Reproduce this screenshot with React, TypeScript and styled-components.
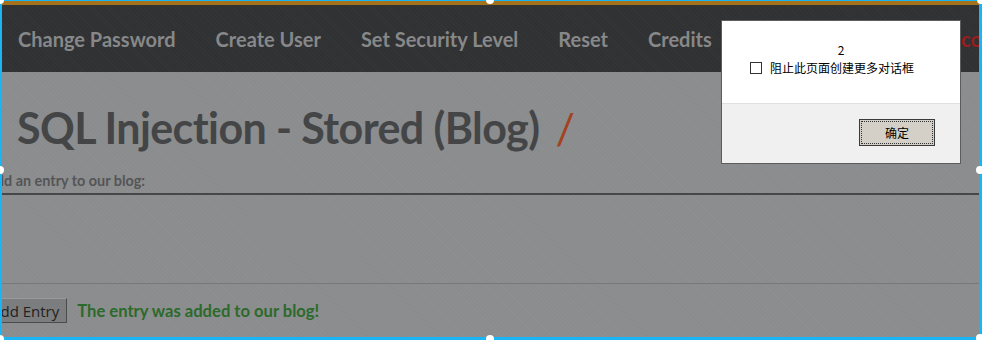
import React from "react";
import styled, { createGlobalStyle } from "styled-components";

const Global = createGlobalStyle`
  html, body { margin: 0; padding: 0; background: #8b8c8d; overflow: hidden; }
  * { box-sizing: border-box; }
`;

const Page = styled.div`
  position: relative;
  width: 982px;
  height: 340px;
  overflow: hidden;
  background-color: #8b8c8d;
  background-image: repeating-linear-gradient(45deg, rgba(255,255,255,0.025) 0 1px, transparent 1px 3px);
  font-family: Lato, "Liberation Sans", sans-serif;
  display: flex;
  flex-direction: column;
`;

const TopStripe = styled.div`
  height: 5px;
  background: #a4721c;
  border-top: 1px solid #19b5f5;
`;

const NavBar = styled.nav`
  height: 67px;
  background-color: #303133;
  background-image: repeating-linear-gradient(45deg, rgba(255,255,255,0.02) 0 1px, transparent 1px 3px);
  display: flex;
  align-items: center;
  padding-left: 18px;
  gap: 40px;
  white-space: nowrap;
`;

const NavItem = styled.span`
  font-family: Lato, "Liberation Sans", sans-serif;
  font-weight: 700;
  font-size: 20px;
  color: #878889;
`;

const Welcome = styled.span`
  margin-left: -8px;
  font-family: Lato, "Liberation Sans", sans-serif;
  font-weight: 700;
  font-size: 20px;
  color: #9a1d1d;
`;

const Content = styled.main`
  display: flex;
  flex-direction: column;
`;

const TitleRow = styled.h1`
  margin: 0;
  padding: 30px 0 0 17px;
  height: 100px;
  display: flex;
  align-items: baseline;
  gap: 16px;
  font-family: Lato, "Liberation Sans", sans-serif;
  font-weight: 700;
  font-size: 43px;
  color: #444547;
  letter-spacing: -0.6px;
  white-space: nowrap;
`;

const Slash = styled.span`
  color: #a3421e;
  font-weight: 400;
`;

const Form = styled.section`
  margin-left: -19px;
  display: flex;
  flex-direction: column;
`;

const Label = styled.div`
  margin-left: 5px;
  font-size: 14.4px;
  font-weight: 700;
  color: #545557;
  height: 21px;
  line-height: 17px;
  white-space: nowrap;
`;

const TextArea = styled.div`
  height: 91px;
  border-top: 2px solid #46474a;
  border-bottom: 1px solid #77787a;
`;

const ActionRow = styled.div`
  display: flex;
  align-items: center;
  gap: 10px;
  margin-top: 14px;
`;

const Button = styled.button`
  height: 25px;
  margin-left: 1px;
  padding: 0 7px 0 8px;
  background: #7c7d7e;
  border: 1px solid #5a5b5c;
  border-right-color: #4a4b4c;
  border-bottom-color: #4a4b4c;
  border-top-color: #9a9a9a;
  color: #222;
  font-family: "Open Sans", "Liberation Sans", sans-serif;
  font-size: 15px;
  line-height: 20px;
`;

const Success = styled.span`
  font-family: Lato, "Liberation Sans", sans-serif;
  font-weight: 700;
  font-size: 16.6px;
  color: #2b6a2b;
`;

const Dialog = styled.div`
  position: absolute;
  left: 721px;
  top: 20px;
  width: 240px;
  height: 144px;
  border: 1px solid #5c5c5c;
  background: #f0f0f0;
  display: flex;
  flex-direction: column;
  font-family: "Noto Sans CJK SC", "Noto Sans", sans-serif;
  font-size: 12px;
  color: #000;
`;

const DialogBody = styled.div`
  background: #fff;
  height: 83px;
  border-bottom: 1px solid #dfdfdf;
  display: flex;
  flex-direction: column;
  align-items: center;
  padding-top: 21px;
  gap: 2px;
`;

const Message = styled.div`
  line-height: 16px;
  height: 16px;
`;

const CheckRow = styled.label`
  align-self: flex-start;
  margin-left: 28px;
  display: flex;
  align-items: center;
  gap: 8px;
  height: 16px;
  line-height: 16px;
`;

const Box = styled.span`
  width: 12px;
  height: 12px;
  border: 1px solid #333;
  background: #fff;
`;

const DialogFooter = styled.div`
  flex: 1;
  display: flex;
  justify-content: flex-end;
  align-items: flex-start;
  padding: 15px 25px 0 0;
`;

const OkButton = styled.button`
  width: 76px;
  height: 27px;
  background: #d4d0c8;
  border: 1px solid #3a3a3a;
  outline: 1px dotted #333;
  outline-offset: -3px;
  font-family: "Noto Sans CJK SC", sans-serif;
  font-size: 12px;
  color: #000;
  padding: 0;
`;

const Frame = styled.div`
  position: absolute;
  inset: 0;
  border-style: solid;
  border-color: #19b5f5;
  border-width: 1px 3px 3px 2px;
  pointer-events: none;
`;

const Handle = styled.span<{ $x: string; $y: string }>`
  position: absolute;
  left: ${(p) => p.$x};
  top: ${(p) => p.$y};
  width: 8px;
  height: 8px;
  margin: -4px 0 0 -4px;
  border-radius: 50%;
  background: #fff;
`;

const handles: [string, string][] = [
  ["0px", "0px"],
  ["490px", "0px"],
  ["981px", "0px"],
  ["0px", "170px"],
  ["980px", "170px"],
  ["0px", "339px"],
  ["490px", "339px"],
  ["980px", "338px"],
];

export default function App() {
  return (
    <>
      <Global />
      <Page>
        <TopStripe />
        <NavBar>
          <NavItem>Change Password</NavItem>
          <NavItem>Create User</NavItem>
          <NavItem>Set Security Level</NavItem>
          <NavItem>Reset</NavItem>
          <NavItem>Credits</NavItem>
          <NavItem>Blog</NavItem>
          <NavItem>Logout</NavItem>
          <Welcome>Welcome Bee</Welcome>
        </NavBar>
        <Content>
          <TitleRow>
            SQL Injection - Stored (Blog)
            <Slash>/</Slash>
          </TitleRow>
          <Form>
            <Label>Add an entry to our blog:</Label>
            <TextArea />
            <ActionRow>
              <Button>Add Entry</Button>
              <Success>The entry was added to our blog!</Success>
            </ActionRow>
          </Form>
        </Content>
        <Dialog>
          <DialogBody>
            <Message>2</Message>
            <CheckRow>
              <Box />
              阻止此页面创建更多对话框
            </CheckRow>
          </DialogBody>
          <DialogFooter>
            <OkButton>确定</OkButton>
          </DialogFooter>
        </Dialog>
        <Frame />
        {handles.map(([x, y], i) => (
          <Handle key={i} $x={x} $y={y} />
        ))}
      </Page>
    </>
  );
}
